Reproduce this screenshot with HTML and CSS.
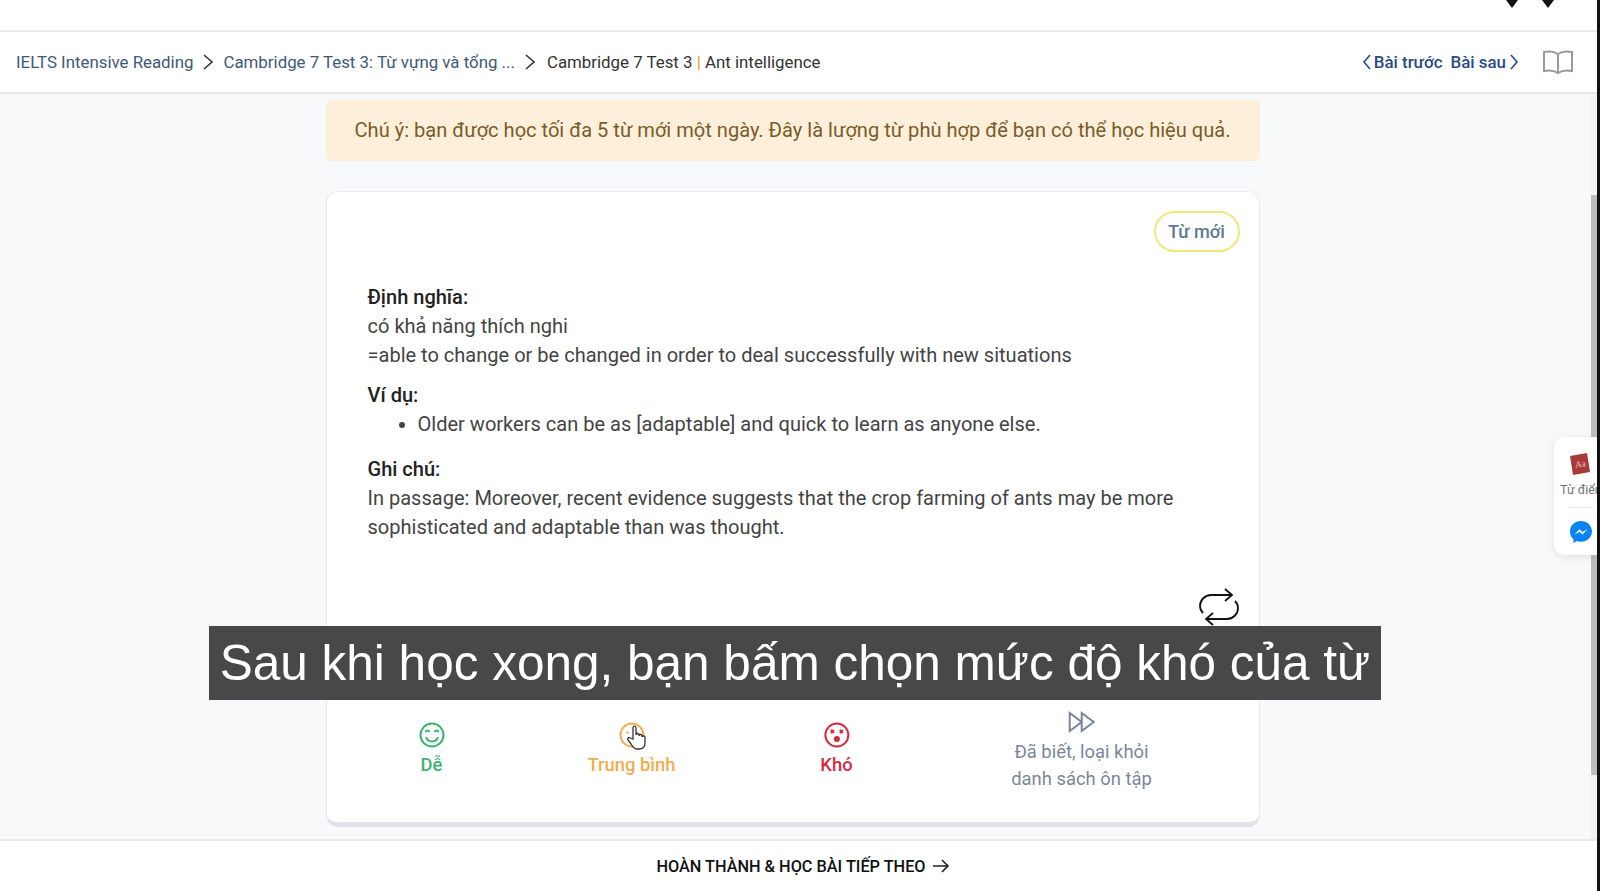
FILE: index.html
```html
<!DOCTYPE html>
<html lang="vi">
  <head>
    <meta charset="UTF-8" />
    <meta name="viewport" content="width=device-width, initial-scale=1.0" />
    <title>Cambridge 7 Test 3 | Ant intelligence</title>
    <link rel="stylesheet" href="styles.css">
  </head>
  <body>
    <div class="page">
      <div class="top-bar">
        <svg class="top-mark" width="14" height="8" viewBox="0 0 14 8"><path d="M1 0h12L7 8z" /></svg>
        <svg class="top-mark" width="14" height="8" viewBox="0 0 14 8"><path d="M1 0h12L7 8z" /></svg>
      </div>

      <div class="crumb-bar">
        <a class="crumb">IELTS Intensive Reading</a>
        <svg class="crumb-sep" width="12" height="18" viewBox="0 0 12 18"><path d="M2 2l8 7-8 7" /></svg>
        <a class="crumb">Cambridge 7 Test 3: Từ vựng và tổng ...</a>
        <svg class="crumb-sep" width="12" height="18" viewBox="0 0 12 18"><path d="M2 2l8 7-8 7" /></svg>
        <span class="crumb-current">Cambridge 7 Test 3 <span class="pipe">|</span> Ant intelligence</span>

        <div class="lesson-nav">
          <svg class="nav-arrow" width="10" height="16" viewBox="0 0 10 16"><path d="M8 1L2 8l6 7" /></svg>
          <span>Bài trước</span>
          <span class="next">Bài sau</span>
          <svg class="nav-arrow nav-arrow-next" width="10" height="16" viewBox="0 0 10 16"><path d="M2 1l6 7-6 7" /></svg>
          <svg class="book" width="32" height="26" viewBox="0 0 32 26"><path d="M16 5C13 3 7 2 2 3v19c5-1 11 0 14 2 3-2 9-3 14-2V3c-5-1-11 0-14 2zM16 5v19" /></svg>
        </div>
      </div>

      <div class="content">
        <div class="notice">Chú ý: bạn được học tối đa 5 từ mới một ngày. Đây là lượng từ phù hợp để bạn có thể học hiệu quả.</div>

        <div class="card">
          <div class="card-top">
            <span class="tag">Từ mới</span>
          </div>

          <div class="card-text">
            <p class="block">
              <b>Định nghĩa:</b><br />
              có khả năng thích nghi<br />
              =able to change or be changed in order to deal successfully with new situations
            </p>
            <div class="block">
              <b>Ví dụ:</b>
              <ul>
                <li>Older workers can be as [adaptable] and quick to learn as anyone else.</li>
              </ul>
            </div>
            <p class="block">
              <b>Ghi chú:</b><br />
              In passage: Moreover, recent evidence suggests that the crop farming of ants may be more sophisticated and adaptable than was thought.
            </p>
          </div>

          <div class="flip-row">
            <svg width="42" height="42" viewBox="0 0 42 42"><path d="M27 3l7 6-7 6M33 9H13C7 9 2 14 2 20c0 3 1 5 3 7M15 39l-7-6 7-6M9 33h20c6 0 11-5 11-11 0-3-1-5-3-7" /></svg>
          </div>

          <div class="rate-row">
            <div class="rate rate-easy">
              <svg width="26" height="26" viewBox="0 0 26 26"><circle cx="13" cy="13" r="11.5" /><path d="M6.5 10c1-2 3-2 4 0M15.500 10c1-2 3-2 4 0M7 15c2 6 10 6 12 0" /></svg>
              <span>Dễ</span>
            </div>
            <div class="rate rate-mid">
              <svg width="26" height="26" viewBox="0 0 26 26"><circle cx="13" cy="13" r="11.5" /><circle class="dot" cx="8.500" cy="10.500" r="1.200" /><circle class="dot" cx="17.500" cy="10.500" r="1.200" /><path d="M8 17h10" /></svg>
              <span>Trung bình</span>
            </div>
            <div class="rate rate-hard">
              <svg width="26" height="26" viewBox="0 0 26 26"><circle cx="13" cy="13" r="11.500" /><path d="M7 8l3 3M10 8l-3 3M16 8l3 3M19 8l-3 3" /><circle class="dot" cx="13" cy="17" r="3" /></svg>
              <span>Khó</span>
            </div>
            <div class="rate rate-skip">
              <svg width="28" height="22" viewBox="0 0 28 22"><path d="M2 2v18l12-9zM14 2v18l12-9z" /></svg>
              <span>Đã biết, loại khỏi<br />danh sách ôn tập</span>
            </div>
          </div>
        </div>
      </div>

      <div class="foot-bar">
        <span>HOÀN THÀNH &amp; HỌC BÀI TIẾP THEO</span>
        <svg width="18" height="16" viewBox="0 0 18 16"><path d="M1 8h15M10 2l6 6-6 6" /></svg>
      </div>

      <div class="scroll-track"><div class="scroll-thumb"></div></div>
      <div class="edge-line"></div>

      <div class="side-tools">
        <svg class="dict-icon" width="22" height="24" viewBox="0 0 22 24"><path d="M1 4l17-3 3 19-17 3z" /><text x="6" y="15" transform="rotate(-8 11 12)">Aa</text></svg>
        <span class="dict-label">Từ điển</span>
        <div class="side-rule"></div>
        <svg class="msg-icon" width="24" height="24" viewBox="0 0 24 24"><path class="msg-bubble" d="M12 1C5.800 1 1 5.500 1 11.500c0 3.200 1.300 5.900 3.500 7.800V23l3.400-1.900c1.300.4 2.700.6 4.100.6 6.200 0 11-4.500 11-10.200S18.200 1 12 1z" /><path class="msg-bolt" d="M5.500 14.500l5-5.300 2.800 2.800 5.200-2.800-5 5.300-2.800-2.800z" /></svg>
      </div>

      <div class="subtitle">Sau khi học xong, bạn bấm chọn mức độ khó của từ</div>

      <svg class="hand" width="20" height="26" viewBox="0 0 20 26"><path d="M6 14V3c0-2.500 3-2.500 3 0v7c0-2 3-2 3 0v1c0-2 3-2 3 0v1c0-1.500 3-1.500 3 0v6c0 4-2 6-6 6h-2c-3 0-4-2-6-5l-3-4c-1-2 1-3 2.500-2z" /></svg>
    </div>
  </body>
</html>
```

FILE: styles.css
```css
* {
  box-sizing: border-box;
}

html,
body {
  margin: 0;
  padding: 0;
  height: 100%;
  overflow: hidden;
}

body {
  font-family: Roboto, Arial, sans-serif;
  color: #333;
  background-color: #f8f9fb;
}

.page {
  position: relative;
  display: flex;
  flex-direction: column;
  height: 891px;
}

.top-bar {
  display: flex;
  justify-content: flex-end;
  align-items: flex-start;
  gap: 22px;
  height: 32px;
  padding-right: 45px;
  background-color: #fff;
  border-bottom: 2px solid #e8e9eb;
}

.top-mark {
  fill: #111;
}

.crumb-bar {
  display: flex;
  align-items: center;
  height: 62px;
  padding: 0 26px 0 16px;
  font-size: 16.85px;
  background-color: #fff;
  border-bottom: 2px solid #e8e9eb;
}

.crumb {
  color: #3d5a78;
}

.crumb-sep {
  margin: 0 9px;
  fill: none;
  stroke: #333;
  stroke-width: 1.6;
}

.crumb-current {
  margin-left: 2px;
  color: #333;
}

.pipe {
  color: #d9992b;
}

.lesson-nav {
  display: flex;
  align-items: center;
  margin-left: auto;
  font-size: 16.9px;
  font-weight: 500;
  color: #2a4a86;
}

.nav-arrow {
  fill: none;
  stroke: #2a4a86;
  stroke-width: 1.6;
  margin: 0 2px;
}

.nav-arrow-next {
  margin-left: 3px;
}

.next {
  margin-left: 8px;
}

.book {
  margin-left: 21px;
  fill: none;
  stroke: #999;
  stroke-width: 2;
}

.content {
  flex: 1;
  display: flex;
  flex-direction: column;
  align-items: center;
  padding-top: 6px;
  padding-right: 15px;
}

.notice {
  width: 934px;
  height: 61px;
  line-height: 61px;
  text-align: center;
  font-size: 20.07px;
  color: #7a5c2a;
  background-color: #fdefd9;
  border-radius: 5px;
}

.card {
  display: flex;
  flex-direction: column;
  width: 934px;
  height: 636px;
  margin-top: 30px;
  background-color: #fff;
  border: 1px solid #e9eaee;
  border-bottom: 5px solid #e2e3e8;
  border-radius: 12px;
}

.card-top {
  display: flex;
  justify-content: flex-end;
  padding: 19px 19px 0 0;
}

.tag {
  width: 86px;
  height: 41px;
  line-height: 37px;
  text-align: center;
  font-size: 18.2px;
  font-weight: 500;
  color: #5d7a94;
  border: 2px solid #f1e678;
  border-radius: 21px;
}

.card-text {
  padding: 31px 40px 0 41px;
  font-size: 20.05px;
  line-height: 29px;
  color: #444;
}

.card-text b {
  font-weight: 500;
  color: #222;
}

.block {
  margin: 0 0 11px 0;
}

.card-text ul {
  margin: 0 0 16px 0;
  padding-left: 50px;
}

.flip-row {
  display: flex;
  justify-content: flex-end;
  padding: 33px 19px 0 0;
}

.flip-row svg {
  fill: none;
  stroke: #111;
  stroke-width: 1.8;
}

.rate-row {
  position: relative;
  flex: 1;
}

.rate {
  position: absolute;
  display: flex;
  flex-direction: column;
  align-items: center;
  font-size: 18.4px;
  font-weight: 500;
  text-align: center;
  transform: translateX(-50%);
}

.rate svg {
  fill: none;
  stroke: currentColor;
  stroke-width: 2;
}

.rate svg .dot {
  fill: currentColor;
  stroke: none;
}

.rate span {
  margin-top: 6px;
}

.rate-easy {
  top: 94px;
  left: 105px;
  color: #3cb371;
}

.rate-mid {
  top: 94px;
  left: 305px;
  color: #f0ad4e;
}

.rate-hard {
  top: 94px;
  left: 510px;
  color: #d6293e;
}

.rate-skip {
  top: 83px;
  left: 755px;
  font-weight: 400;
  line-height: 26.5px;
  color: #7a8798;
}

.rate-skip span {
  margin-top: 6px;
}

.foot-bar {
  display: flex;
  justify-content: center;
  align-items: center;
  gap: 6px;
  height: 52px;
  padding: 0 0 0 6px;
  font-size: 16.3px;
  font-weight: 500;
  color: #111;
  background-color: #fff;
  border-top: 2px solid #e8e9eb;
}

.foot-bar svg {
  fill: none;
  stroke: #222;
  stroke-width: 1.6;
}

.scroll-track {
  position: absolute;
  top: 94px;
  right: 3px;
  width: 6px;
  height: 745px;
  background-color: #f3f3f4;
}

.scroll-thumb {
  margin-top: 101px;
  height: 580px;
  background-color: #bdbdbd;
}

.edge-line {
  position: absolute;
  top: 0;
  right: 0;
  width: 3px;
  height: 891px;
  background-color: #111;
}

.side-tools {
  position: absolute;
  top: 437px;
  right: 3px;
  display: flex;
  flex-direction: column;
  align-items: flex-start;
  width: 43px;
  height: 118px;
  padding-top: 15px;
  overflow: hidden;
  background-color: #fff;
  border-radius: 10px 0 0 10px;
  box-shadow: 0 2px 8px rgba(0, 0, 0, 0.1);
}

.dict-icon {
  flex: none;
  margin-left: 15px;
  fill: #a93a3a;
}

.dict-icon text {
  font-family: "Liberation Serif", serif;
  font-size: 9px;
  fill: #e8c8c0;
}

.dict-label {
  margin-top: 6px;
  margin-left: 6px;
  font-size: 12.5px;
  white-space: nowrap;
  color: #6d7478;
}

.side-rule {
  flex: none;
  width: 26px;
  height: 1px;
  margin: 10px 0 12px 14px;
  background-color: #e6e6e6;
}

.msg-icon {
  flex: none;
  margin-left: 15px;
}

.msg-bubble {
  fill: #0a84f5;
}

.msg-bolt {
  fill: #fff;
}

.subtitle {
  position: absolute;
  top: 626px;
  left: 209px;
  width: 1172px;
  height: 74px;
  line-height: 74px;
  text-align: center;
  white-space: nowrap;
  font-family: "Liberation Sans", Arial, sans-serif;
  font-size: 49.5px;
  color: #fff;
  background-color: #484848;
}

.hand {
  position: absolute;
  top: 725px;
  left: 627px;
  fill: #fff;
  stroke: #333;
  stroke-width: 1.3;
}
```
